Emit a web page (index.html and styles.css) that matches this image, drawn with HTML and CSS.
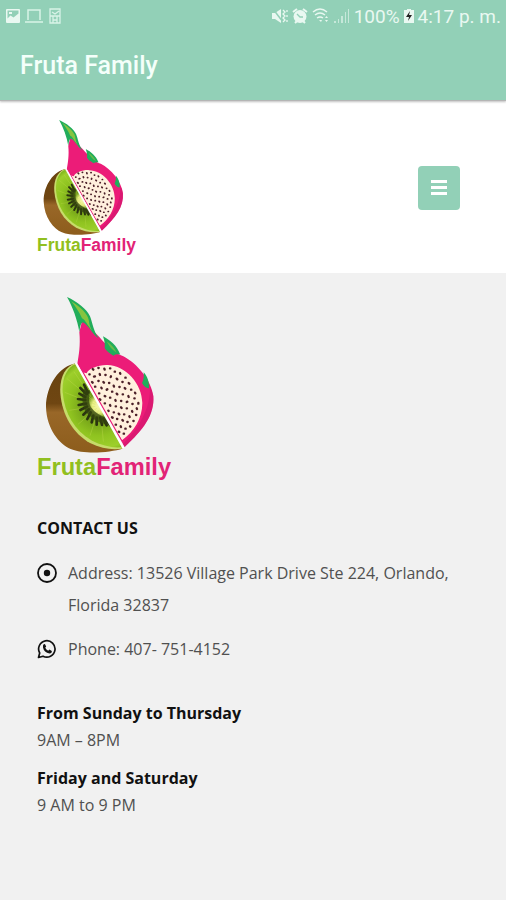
FILE: index.html
```html
<!DOCTYPE html>
<html lang="en">
<head>
    <meta charset="UTF-8">
    <meta name="viewport" content="width=device-width, initial-scale=1.0">
    <title>Fruta Family</title>
    <link rel="stylesheet" href="styles.css">
</head>
<body>
    <div class="app-bar">
        <div class="status-bar">
            <div class="status-group">
                <svg class="status-icon" viewBox="0 0 16 16"><path fill-rule="evenodd" d="M2 1h12q1 0 1 1v12q0 1-1 1H2q-1 0-1-1V2q0-1 1-1zM2.500 2.500v8l3-3 3 2 5-4v-3zM4 4h3v2H4z"/></svg>
                <svg class="status-icon wide" viewBox="0 0 18 16"><path fill="none" stroke="#d9f3e8" stroke-width="1.5" d="M3 12V2h12v10M0 14h18"/></svg>
                <svg class="status-icon" viewBox="0 0 16 16"><path fill="none" stroke="#d9f3e8" stroke-width="1.3" d="M3 1h10v14H3zM3 8h10M5 4l3 2 4-3M6 8v7M10 8v7M6 12h4"/></svg>
            </div>
            <div class="status-group">
                <svg class="status-icon" viewBox="0 0 16 16"><path d="M0 5h3l6-4v14l-6-4H0z"/><path fill="none" stroke="#92d0b7" stroke-width="1.5" d="M1 1l10 13"/><path fill="none" stroke="#e9f8f1" stroke-width="1.3" d="M11 2l2 2-2 2 2 2-2 2 2 2-2 2M15 2v2M15 7v2M15 12v2"/></svg>
                <svg class="status-icon" viewBox="0 0 16 16"><circle cx="8" cy="8.500" r="6.500"/><path fill="none" stroke="#e9f8f1" stroke-width="2" d="M1 4l4-3M15 4l-4-3M3 15l2-2M13 15l-2-2"/><path fill="none" stroke="#92d0b7" stroke-width="1.3" d="M5 6l3 3h3"/></svg>
                <svg class="status-icon wide" viewBox="0 0 18 16"><path fill="none" stroke="#e9f8f1" stroke-width="1.5" d="M1 4q7-6 14 0M3 7q5-4 10 0M5 10q3-2 6 0"/><path d="M7 12h3l-1 2zM13 10l1.500-2 1.500 2zM13 12h3l-1.500 2z"/></svg>
                <svg class="status-icon" viewBox="0 0 16 16"><path opacity=".6" d="M0 13h2v2H0zM4 11h1v4H4zM7 8h2v7H7zM11 4h1v11h-1zM14 1h1v14h-1z"/></svg>
                <span>100%</span>
                <svg class="status-icon battery" viewBox="0 0 10 16"><path d="M3 1h4v1h3v13H0V2h3z"/><path fill="#222" d="M6 3L2 9h3l-1 4 4-6H5z"/></svg>
                <span>4:17 p. m.</span>
            </div>
        </div>
        <div class="app-title">Fruta Family</div>
    </div>

    <header class="site-header">
        <a href="#" class="site-logo" aria-label="Fruta Family">
            <svg class="logo logo-small" viewBox="51 33 402 555">
                <defs>
                    <linearGradient id="skin" x1="0" y1="0" x2="0" y2="1">
                        <stop offset="0" stop-color="#68430f"/>
                        <stop offset="0.45" stop-color="#6f4612"/>
                        <stop offset="0.55" stop-color="#996728"/>
                        <stop offset="1" stop-color="#8d5d1c"/>
                    </linearGradient>
                    <radialGradient id="kiwi" gradientUnits="userSpaceOnUse" cx="238" cy="362" r="150">
                        <stop offset="0" stop-color="#f6f7b0"/>
                        <stop offset="0.14" stop-color="#e9ee84"/>
                        <stop offset="0.24" stop-color="#6d9817"/>
                        <stop offset="0.6" stop-color="#8fc320"/>
                        <stop offset="0.85" stop-color="#9dcf2b"/>
                        <stop offset="1" stop-color="#74a915"/>
                    </radialGradient>
                    <clipPath id="kiwi-half"><path d="M40 220H164L308 492V520H40z"/></clipPath>
                    <clipPath id="flesh-half"><path d="M174 232L312 476L400 510V200z"/></clipPath>
                </defs>
                <g id="fruit">
                    <path fill="#ec1c78" d="M186 108C206 118 218 136 238 156C262 184 286 206 310 214C352 236 394 286 400 334C404 390 370 434 314 486L172 236C176 214 182 180 178 142z"/>
                    <path fill="#c9146a" opacity=".5" d="M390 306C392 374 354 430 309 477L314 486C370 434 404 390 400 334C398 322 394 314 390 306z"/>
                    <path fill="#21ad5b" d="M141 36C172 50 200 72 210 94C218 114 220 138 236 160C218 150 206 120 188 112C180 118 180 130 178 141C172 104 158 66 141 36z"/>
                    <path fill="#86c440" d="M154 49C182 66 202 86 206 104C208 120 212 130 217 138C202 122 196 104 186 100C178 82 168 66 154 49z"/>
                    <path fill="#21ad5b" d="M249 154C270 166 290 180 301 209C294 207 286 208 280 212C272 206 262 202 254 190C256 178 253 166 249 154z"/>
                    <path fill="#69bd48" d="M260 169C274 178 284 190 290 203C278 196 268 186 260 169z"/>
                    <path fill="#21ad5b" d="M371 262C382 274 388 290 387 310C380 310 371 304 366 294C371 286 372 274 371 262z"/>
                    <g clip-path="url(#flesh-half)">
                        <path fill="#fff0dd" d="M200 265C206 250 236 239 262 240C318 242 366 296 367 354C367 400 342 440 306 466L180 260z"/>
                        <path fill="none" stroke="#4c2029" stroke-width="7" stroke-linecap="round" d="M208 268h1M218 252l2 2M235 249h1M253 251l1 3M270 250h1M284 260h1M300 264l1 2M316 278h1M222 275l3-1M239 267l1 3M256 270h1M272 276l1-2M290 281l2 2M307 291h1M326 294l2 2M216 291l2 2M235 288h1M250 291l2 2M267 294h1M281 302l1 3M298 306h1M314 309l2 2M333 314h1M345 323l1 2M225 305h1M244 308l1 2M260 314l2-1M276 320h1M290 326l2 2M308 328h1M325 333l1 3M343 340h1M355 354v2M237 325h1M254 333l2 1M270 338h1M286 345l1 2M303 348h1M320 351l2-1M337 357h1M350 370l1 2M239 343l2 1M254 355h1M270 360l1 2M287 364h1M303 367l2 2M320 370h1M336 378l1 2M348 390h1M265 377l1 1M281 382h1M296 386l2 2M312 388h1M328 394l1 2M340 408h1M276 397l2 1M291 402h1M307 405l2 2M322 411h1M330 424l1 1M287 419h1M302 424l1 2M316 431h1M296 440l2 1M311 446h1"/>
                    </g>
                    <g clip-path="url(#kiwi-half)">
                        <path fill="url(#skin)" d="M168 235C120 242 78 300 78 366C80 432 118 478 152 492C190 508 268 504 310 490z"/>
                        <path fill="#c6dc6a" d="M166 235C136 244 118 278 121 324C126 392 160 446 210 474C246 492 282 496 310 490z"/>
                        <path fill="url(#kiwi)" d="M166 238C142 246 125 280 128 322C134 388 164 436 214 466C248 484 282 490 310 486z"/>
                        <path fill="none" stroke="#c5df57" stroke-width="2" opacity=".5" d="M228 354L140 280M226 358L134 322M226 364L148 376M230 370L174 418M235 376L210 452M242 379L250 470M214 337L162 260"/>
                        <path fill="none" stroke="#2b350f" stroke-width="8" stroke-linecap="round" d="M192 299l12 24M181 309l19 19M178 326l18 10M174 342l22 3M176 360l22-4M181 375l20-10M190 389l17-16M202 402l10-20M215 412l5-20M230 419v-21M246 420l-5-22M260 421l-10-20M270 420l-10-15"/>
                        <path fill="none" stroke="#34430f" stroke-width="20" opacity=".75" d="M202 314Q191 346 204 372Q222 398 262 410"/>
                    </g>
                    <path fill="none" stroke="#fff" stroke-width="6" d="M167 233L310 489"/>
                    <text class="logo-text" x="51" y="569"><tspan fill="#91bf20">Fruta</tspan><tspan fill="#e22376">Family</tspan></text>
                </g>
            </svg>
        </a>
        <button type="button" class="menu-button" aria-label="Menu">
            <span></span>
            <span></span>
            <span></span>
        </button>
    </header>

    <main class="contact">
        <svg class="logo" viewBox="51 33 402 555" role="img" aria-label="Fruta Family"><use href="#fruit"/></svg>

        <h2>CONTACT US</h2>
        <ul class="contact-list">
            <li>
                <svg class="contact-icon" viewBox="0 0 20 20"><circle cx="10" cy="10" r="9" fill="none" stroke="#111" stroke-width="1.8"/><circle cx="10" cy="10" r="3.200" fill="#111"/></svg>
                <span>Address: 13526 Village Park Drive Ste 224, Orlando, Florida 32837</span>
            </li>
            <li>
                <svg class="contact-icon" viewBox="0 0 20 20"><path fill="none" stroke="#111" stroke-width="1.700" stroke-linejoin="round" d="M1.500 18.500l1.200-4.500A8.200 8.200 0 1 1 6 17.200z"/><path fill="#111" d="M6 6.500q1-2 2-1.200l1.200 2.300-1 1.200q1 2 3 3l1.200-1.200 2.400 1.300q.3 2.200-2.300 2.600Q7 13.500 6 8.500z"/></svg>
                <span>Phone: 407- 751-4152</span>
            </li>
        </ul>

        <div class="hours">
            <h3>From Sunday to Thursday</h3>
            <p>9AM – 8PM</p>
            <h3>Friday and Saturday</h3>
            <p>9 AM to 9 PM</p>
        </div>
    </main>
</body>
</html>
```
FILE: styles.css
```css
* {
    box-sizing: border-box;
}

body {
    font-family: "Open Sans", sans-serif;
    font-size: 16px;
    color: #505050;
    background-color: #f1f1f1;
    margin: 0;
}

.app-bar {
    background-color: #92d0b7;
    color: #f4fffa;
    font-family: Roboto, sans-serif;
    border-bottom: 1px solid #b5b5b5;
    box-shadow: 0 1px 2px rgba(0, 0, 0, 0.25);
    position: relative;
}

.status-bar {
    display: flex;
    justify-content: space-between;
    height: 32px;
    padding: 0 5px;
    font-size: 19px;
    color: #e9f8f1;
}

.status-group {
    display: flex;
    align-items: center;
    gap: 4px;
}

.status-icon {
    width: 16px;
    height: 16px;
    fill: #e9f8f1;
}

.status-icon.wide {
    width: 18px;
}

.status-icon.battery {
    width: 10px;
}

.app-title {
    padding: 18px 20px;
    font-size: 25px;
    font-weight: 500;
    line-height: 32px;
}

.site-header {
    display: flex;
    align-items: center;
    justify-content: space-between;
    background-color: white;
    padding: 18px 46px 17px 37px;
}

.site-logo {
    display: block;
}

.logo {
    display: block;
    width: 134px;
    height: 185px;
    overflow: visible;
}

.logo-small {
    width: 99px;
    height: 137px;
}

.logo-text {
    font-family: "Liberation Sans", Arial, sans-serif;
    font-size: 71px;
    font-weight: bold;
}

.menu-button {
    display: flex;
    flex-direction: column;
    align-items: center;
    justify-content: center;
    gap: 3px;
    width: 42px;
    height: 44px;
    padding: 0;
    background-color: #92d0b7;
    border: none;
    border-radius: 4px;
    cursor: pointer;
}

.menu-button span {
    width: 16px;
    height: 3px;
    background-color: white;
}

.contact {
    padding: 23px 37px;
}

h2, h3 {
    margin: 0;
    font-size: 16px;
    font-weight: bold;
    line-height: 28px;
    color: #111;
}

h2 {
    margin-top: 33px;
}

.contact-list {
    list-style: none;
    margin: 15px 0 34px;
    padding: 0;
}

.contact-list li {
    display: flex;
    gap: 11px;
    margin-bottom: 12px;
    line-height: 32px;
}

.contact-icon {
    flex: none;
    width: 20px;
    height: 32px;
}

.hours p {
    margin: 0 0 11px;
    line-height: 26px;
}
```
